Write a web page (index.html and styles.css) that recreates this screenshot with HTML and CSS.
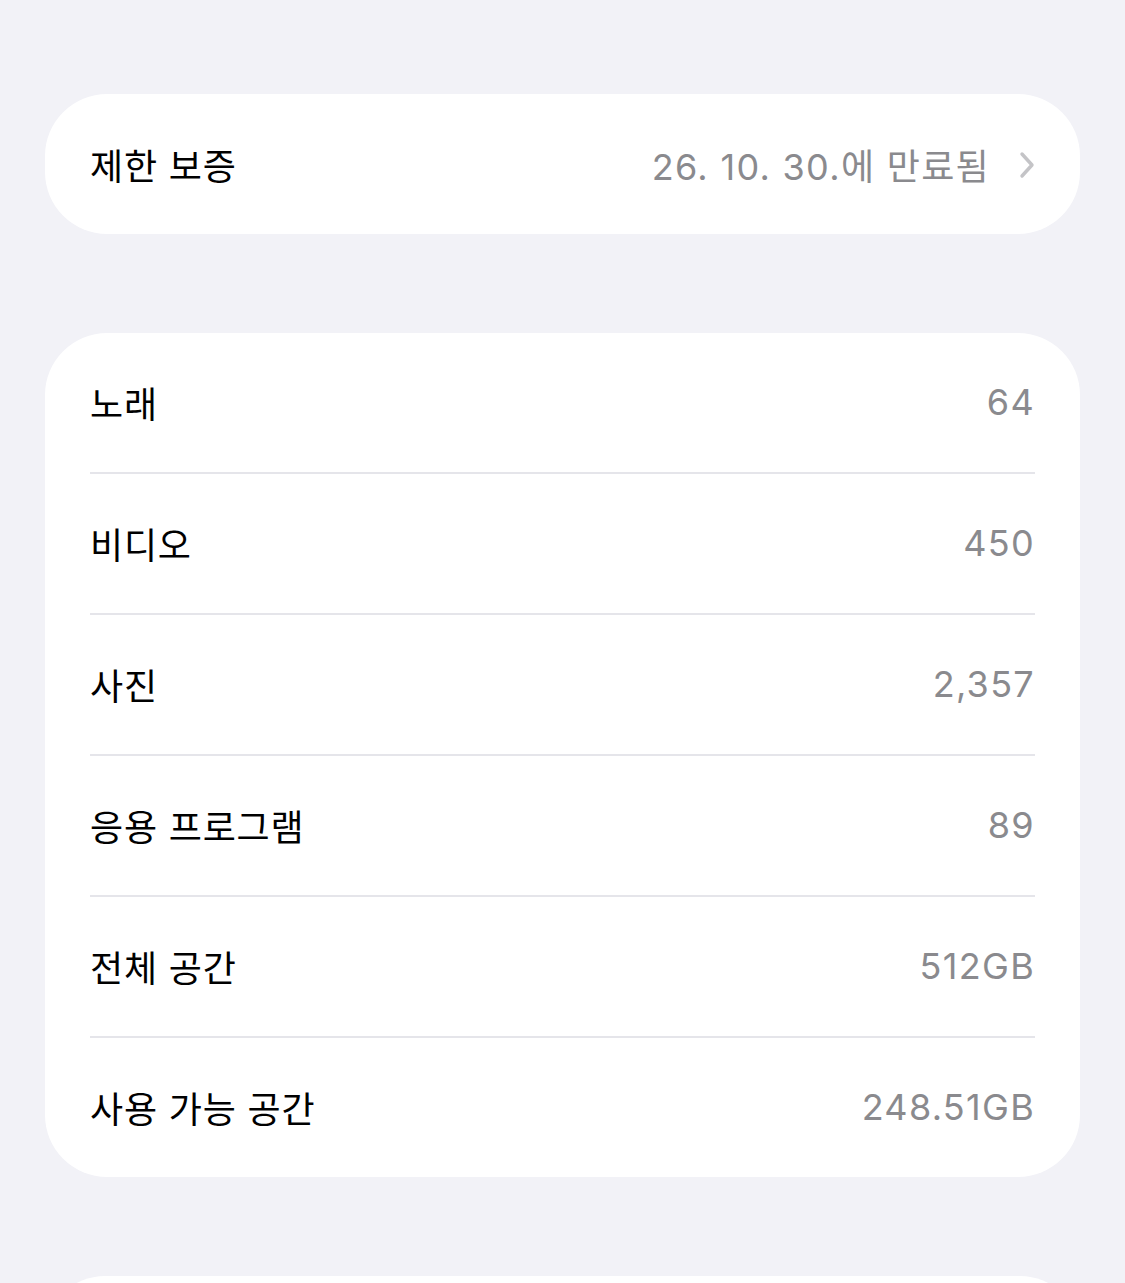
FILE: index.html
```html
<!DOCTYPE html>
<html lang="ko">
<head>
<meta charset="UTF-8" />
<meta name="viewport" content="width=device-width, initial-scale=1" />
<title>정보</title>
<link rel="stylesheet" href="styles.css">
</head>
<body>

<div class="page">
  <div class="group">
    <div class="row link">
      <span class="label">제한 보증</span>
      <span class="value">26. 10. 30.에 만료됨</span>
      <svg class="chevron" width="16" height="28" viewBox="0 0 16 28">
        <path d="M3 3 L13 14 L3 25" fill="none" stroke="#c4c4c7" stroke-width="3.4" stroke-linecap="round" stroke-linejoin="round"/>
      </svg>
    </div>
  </div>

  <div class="group">
    <div class="row"><span class="label">노래</span><span class="value">64</span></div>
    <div class="row"><span class="label">비디오</span><span class="value">450</span></div>
    <div class="row"><span class="label">사진</span><span class="value">2,357</span></div>
    <div class="row"><span class="label">응용 프로그램</span><span class="value">89</span></div>
    <div class="row"><span class="label">전체 공간</span><span class="value">512GB</span></div>
    <div class="row"><span class="label">사용 가능 공간</span><span class="value">248.51GB</span></div>
  </div>

  <div class="group peek"></div>
</div>

</body>
</html>
```

FILE: styles.css
```css
body {
  margin: 0;
  padding: 0;
  background: #f2f2f7;
  font-family: Inter, "Noto Sans CJK KR", sans-serif;
  overflow: hidden;
}
.page {
  display: flex;
  flex-direction: column;
  gap: 99px;
  padding: 94px 45px 0 45px;
}
.group {
  background: #fff;
  border-radius: 62px;
  padding: 0 45px;
}
.row {
  display: flex;
  align-items: center;
  box-sizing: border-box;
  height: 141px;
  padding-bottom: 1px;
  border-bottom: 2px solid #e5e5ea;
  font-size: 36px;
}
.row:last-child {
  border-bottom: none;
  height: 139px;
}
.link.row {
  height: 140px;
}
.label {
  flex: 1;
  color: #000;
  letter-spacing: 0.8px;
}
.value {
  color: #8a8a8e;
  letter-spacing: 1.3px;
}
.link .value {
  margin-right: 29px;
}
.chevron {
  display: block;
  margin-top: 2px;
}
.peek {
  height: 120px;
}
```
